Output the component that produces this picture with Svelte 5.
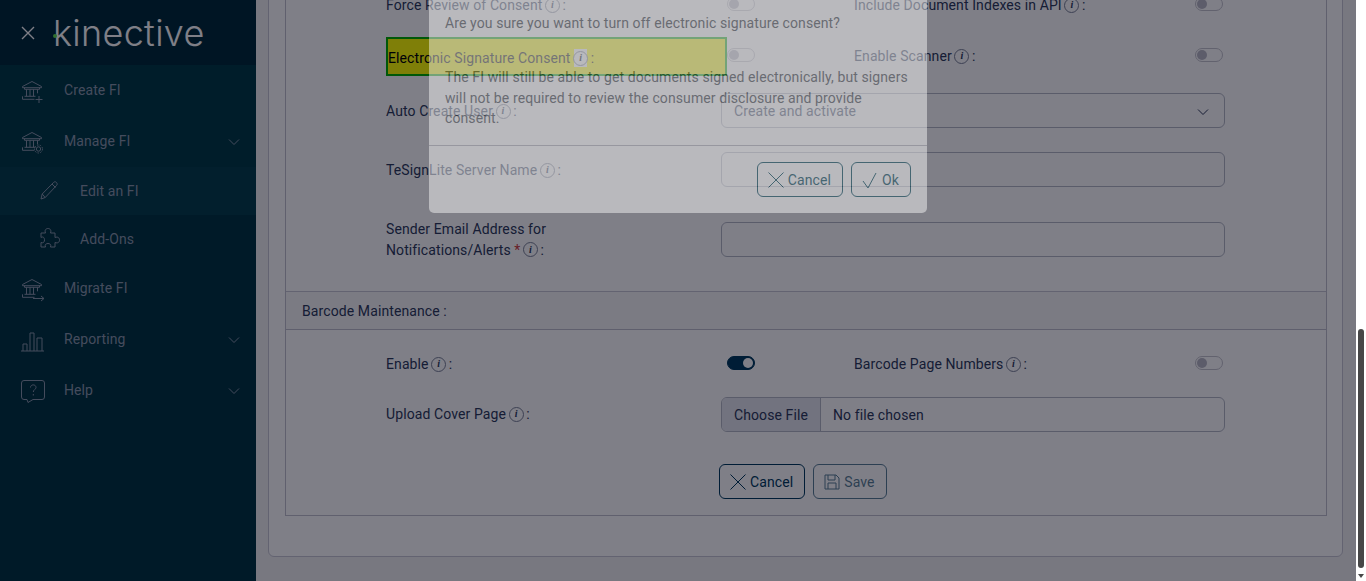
<script lang="ts">
  const nav = [
    { label: 'Create FI', icon: 'bank-plus', band: true },
    { label: 'Manage FI', icon: 'bank-gear', band: true, caret: true },
    { label: 'Edit an FI', icon: 'pencil', sub: true, active: true },
    { label: 'Add-Ons', icon: 'puzzle', sub: true },
    { label: 'Migrate FI', icon: 'bank-arrow' },
    { label: 'Reporting', icon: 'chart', caret: true },
    { label: 'Help', icon: 'help', caret: true },
  ];
</script>

{#snippet bank()}
  <path d="M2.5 8.5 12 3.5l9.500 5v1.200h-19zM4.500 9.700v1.600h15V9.700M6.500 11.300v7M10 11.300v7M13.500 11.300v7M17.500 11.300v4M4.500 18.300h11M2.500 18.300v3h12" />
{/snippet}

{#snippet info()}
  <span class="info"><i>i</i></span>
{/snippet}

{#snippet toggle(on = false)}
  <span class="toggle" class:on></span>
{/snippet}

<div class="page">
  <aside class="sidebar">
    <div class="brand">
      <svg class="close" viewBox="0 0 16 16" width="16" height="16"><path d="M2 2l12 12M14 2 2 14" /></svg>
      <span class="logo"><span class="logo-dot"></span>kinective</span>
    </div>
    <nav>
      {#each nav as item}
        <div class="nav-item" class:band={item.band} class:sub={item.sub} class:active={item.active}>
          <svg class="nav-icon" viewBox="0 0 26 26" width="26" height="26">
            {#if item.icon === 'bank-plus'}
              {@render bank()}
              <path d="M19 18v7M15.500 21.500h7" />
            {:else if item.icon === 'bank-gear'}
              {@render bank()}
              <circle cx="18.500" cy="20" r="2.200" />
              <circle cx="18.500" cy="20" r="4" stroke-dasharray="1.600 1.200" />
            {:else if item.icon === 'bank-arrow'}
              {@render bank()}
              <path d="M13 22.500h11M21 20l3 2.500-3 2.500" />
            {:else if item.icon === 'pencil'}
              <path d="M5 21l1.200-5L17.500 4.500c1-1 2.200-1 3 0s1 2 0 3L9.200 19.500zM6.200 16l3 3.500M16 6l3.500 3.500" />
            {:else if item.icon === 'puzzle'}
              <path d="M5 7h4.500c-1.200-3 .5-4.500 2.500-4.500S15.700 4 14.500 7H19v4.500c3-1.200 4.500.5 4.500 2.500s-1.500 3.700-4.500 2.500V21h-4.500c1-2.500-.7-3.500-2.500-3.500s-3.500 1-2.500 3.500H5v-4.500c2.500 1 3.500-.7 3.500-2.500S7.500 10 5 11.500z" />
            {:else if item.icon === 'chart'}
              <path d="M1 24h23M3 24v-7h4v7M10 24V6h4v18M17 24V11h5v13" />
            {:else}
              <path d="M4 2.500h18a2.500 2.500 0 0 1 2.500 2.500v14a2.500 2.500 0 0 1-2.500 2.500H13l-5 3-1-3H4A2.500 2.500 0 0 1 1.500 19V5A2.500 2.500 0 0 1 4 2.500z" />
              <path d="M10.500 9.500c0-3.500 5.500-3.500 5.500 0 0 2-2.700 2-2.700 4.500M13.300 16v1.500" />
            {/if}
          </svg>
          <span class="nav-label">{item.label}</span>
          {#if item.caret}
            <svg class="caret" viewBox="0 0 12 8" width="12" height="8"><path d="M1 1.500l5 5 5-5" /></svg>
          {/if}
        </div>
      {/each}
    </nav>
  </aside>

  <main class="content">
    <div class="card">
      <div class="panel">
        <div class="panel-body">
          <div class="row row-toggle gap-16">
            <span class="label">Force Review of Consent {@render info()} :</span>
            <div class="pair">
              {@render toggle()}
              <span class="label">Include Document Indexes in API {@render info()} :</span>
              {@render toggle()}
            </div>
          </div>
          <div class="row row-toggle gap-20">
            <span class="label highlight">Electronic Signature Consent <span class="info-lit">{@render info()}</span> :</span>
            <div class="pair">
              {@render toggle()}
              <span class="label">Enable Scanner {@render info()} :</span>
              {@render toggle()}
            </div>
          </div>
          <div class="row gap-24 nudge">
            <span class="label">Auto Create User {@render info()} :</span>
            <div class="field select">
              Create and activate
              <svg viewBox="0 0 12 8" width="12" height="8"><path d="M1 1.500l5 5 5-5" /></svg>
            </div>
          </div>
          <div class="row gap-32 nudge">
            <span class="label">TeSignLite Server Name {@render info()} :</span>
            <div class="field"></div>
          </div>
          <div class="row">
            <span class="label">Sender Email Address for<br />Notifications/Alerts <b>*</b> {@render info()} :</span>
            <div class="field"></div>
          </div>
        </div>

        <div class="section-title">Barcode Maintenance :</div>

        <div class="panel-body barcode">
          <div class="row row-toggle gap-16">
            <span class="label">Enable {@render info()} :</span>
            <div class="pair">
              {@render toggle(true)}
              <span class="label">Barcode Page Numbers {@render info()} :</span>
              {@render toggle()}
            </div>
          </div>
          <div class="row">
            <span class="label">Upload Cover Page {@render info()} :</span>
            <div class="field file">
              <span class="file-btn">Choose File</span>
              <span class="file-name">No file chosen</span>
            </div>
          </div>
          <div class="actions">
            <span class="btn">
              <svg viewBox="0 0 18 18" width="18" height="18"><path d="M1.500 1.500l15 15M16.500 1.500l-15 15" /></svg>
              Cancel
            </span>
            <span class="btn disabled">
              <svg viewBox="0 0 18 18" width="18" height="18"><path d="M2 2h11l3 3v11H2zM5 2v5h7V2M5 16v-6h8v6" /></svg>
              Save
            </span>
          </div>
        </div>
      </div>
    </div>
  </main>

  <div class="overlay">
    <div class="modal">
      <div class="modal-body">
        <p>Are you sure you want to turn off electronic signature consent?</p>
        <p class="detail">The FI will still be able to get documents signed electronically, but signers will not be required to review the consumer disclosure and provide consent.</p>
      </div>
      <div class="modal-footer">
        <span class="btn">
          <svg viewBox="0 0 18 18" width="18" height="18"><path d="M1.500 1.500l15 15M16.500 1.500l-15 15" /></svg>
          Cancel
        </span>
        <span class="btn">
          <svg viewBox="0 0 18 18" width="18" height="18"><path d="M2 10l5 7L15 2" /></svg>
          Ok
        </span>
      </div>
    </div>
  </div>

  <div class="scrollbar">
    <span class="thumb"></span>
    <span class="arrow"></span>
  </div>
</div>

<style>
  :global(body) {
    margin: 0;
    overflow: hidden;
  }

  .page {
    position: relative;
    display: flex;
    height: 581px;
    overflow: hidden;
    font-family: Roboto, "Liberation Sans", sans-serif;
    font-size: 14px;
    letter-spacing: 0.1px;
    line-height: 20.5px;
    color: #2d3a5a;
    background: #f0f0f0;
  }

  svg {
    fill: none;
    stroke: currentColor;
    stroke-width: 1;
  }

  /* sidebar */
  .sidebar {
    flex: 0 0 256px;
    background: #003440;
    color: #8a98aa;
  }

  .brand {
    display: flex;
    align-items: center;
    gap: 17px;
    height: 65px;
    padding-left: 20px;
    background: #002a38;
    color: #fff;
  }

  .close {
    stroke-width: 1.400;
  }

  .logo {
    position: relative;
    font-family: Inter, sans-serif;
    font-weight: 300;
    font-size: 36px;
    line-height: 40px;
    letter-spacing: 0.3px;
  }

  .logo-dot {
    position: absolute;
    left: 0;
    top: 21px;
    width: 4px;
    height: 4px;
    border-radius: 50%;
    background: #60e050;
  }

  .nav-item {
    display: flex;
    align-items: center;
    height: 51px;
    padding-left: 20px;
  }

  .nav-item.band {
    background: #003a44;
  }

  .nav-item.sub {
    height: 48px;
    padding-left: 36px;
  }

  .nav-item.active {
    background: #043e4a;
  }

  .nav-icon {
    flex: none;
    margin-right: 18px;
  }

  .caret {
    margin-left: auto;
    margin-right: 16px;
  }

  /* page content, scrolled to the bottom */
  .content {
    flex: 1;
    min-width: 0;
    display: flex;
    flex-direction: column;
    justify-content: flex-end;
    padding: 0 13px 24px 12px;
  }

  .card {
    flex: none;
    padding: 0 15px 40px 16px;
    background: #fff;
    border: 1px solid #c6c6d2;
    border-radius: 0 0 6px 6px;
  }

  .panel {
    border: 1px solid #c0c0cc;
    border-top: 0;
  }

  .panel-body {
    padding: 0 101px 31px 100px;
  }

  .section-title {
    height: 37px;
    padding-left: 16px;
    line-height: 39px;
    background: #f6f6f7;
    border-top: 1px solid #c6c6d2;
    border-bottom: 1px solid #bebeca;
  }

  .barcode {
    padding-top: 16px;
    padding-bottom: 16px;
  }

  .row {
    display: grid;
    grid-template-columns: 335px 504px;
    align-items: center;
    min-height: 35px;
  }

  .gap-16 { margin-bottom: 16px; }
  .gap-20 { margin-bottom: 20px; }
  .gap-24 { margin-bottom: 24px; }
  .gap-32 { margin-bottom: 32px; }

  .nudge .label,
  .nudge .select,
  .row-toggle .label {
    padding-top: 2px;
  }

  .barcode .row { margin-bottom: 16px; }
  .barcode .row:nth-child(2) { margin-bottom: 32px; }

  .pair {
    display: grid;
    grid-template-columns: 127px 341px 30px;
    align-items: center;
    padding-left: 6px;
  }

  .label b {
    color: #d04040;
    font-weight: 400;
  }

  .row-toggle .highlight {
    display: block;
    width: 337px;
    height: 35px;
    padding: 0;
    line-height: 39px;
    border: 2px solid #00b000;
    background: #ff0;
    color: #000;
    margin: -1px -6px -3px 0;
  }

  .info {
    display: inline-flex;
    align-items: center;
    justify-content: center;
    width: 15px;
    height: 15px;
    margin: 0 -1px 0 -1px;
    border: 1px solid #7a8296;
    border-radius: 50%;
    vertical-align: 2px;
    box-sizing: border-box;
  }

  .info i {
    font-family: "Liberation Serif", serif;
    font-weight: 700;
    font-size: 10px;
    line-height: 10px;
  }

  .info-lit {
    background: #fff;
    display: inline-block;
    line-height: 18px;
  }

  .toggle {
    position: relative;
    display: block;
    width: 28px;
    height: 14px;
    margin-top: -2px;
    box-sizing: border-box;
    border: 1px solid #c4c4cc;
    border-radius: 7px;
  }

  .toggle::after {
    content: "";
    position: absolute;
    left: 1px;
    top: 1px;
    width: 10px;
    height: 10px;
    border-radius: 50%;
    background: #b8b8c4;
  }

  .toggle.on {
    background: #003a5c;
    border-color: #003a5c;
  }

  .toggle.on::after {
    left: 15px;
    background: #fff;
  }

  .field {
    height: 35px;
    box-sizing: border-box;
    border: 1px solid #b4b8c4;
    border-radius: 6px;
    background: #fff;
  }

  .select {
    display: flex;
    align-items: center;
    justify-content: space-between;
    padding: 0 15px 0 12px;
  }

  .file {
    display: flex;
    align-items: center;
    overflow: hidden;
  }

  .file-btn {
    display: flex;
    align-items: center;
    height: 100%;
    padding: 1px 12px 0;
    box-sizing: border-box;
    background: #e4e6ee;
    border-right: 1px solid #b4b8c4;
  }

  .file-name {
    padding: 1px 0 0 12px;
  }

  .actions {
    display: flex;
    gap: 8px;
    margin-left: 333px;
  }

  .btn {
    display: inline-flex;
    align-items: center;
    gap: 3px;
    height: 35px;
    padding: 1px 11px 0 9px;
    box-sizing: border-box;
    border: 1px solid #003a5c;
    border-radius: 6px;
    color: #003a5c;
    background: transparent;
  }

  .btn svg {
    margin-top: -1px;
  }

  .btn.disabled {
    opacity: 0.65;
  }

  /* dialog fading in over the dimmed page */
  .overlay {
    position: absolute;
    inset: 0 10px 0 0;
    background: rgba(0, 0, 16, 0.5);
  }

  .modal {
    position: absolute;
    left: 429px;
    top: 0;
    width: 498px;
    height: 213px;
    box-sizing: border-box;
    background: #fff;
    border-radius: 0 0 5px 5px;
    opacity: 0.45;
    color: #50555a;
  }

  .modal-body {
    padding: 13px 16px 0;
    height: 132px;
    border-bottom: 1px solid #b4b4bc;
  }

  .modal-body p {
    margin: 0;
  }

  .modal-body .detail {
    margin-top: 33.6px;
  }

  .modal-footer {
    display: flex;
    justify-content: flex-end;
    gap: 8px;
    padding: 16px 16px 0;
  }

  .modal-footer .btn {
    color: #00495a;
    border-color: #00495a;
  }

  .scrollbar {
    position: relative;
    flex: 0 0 10px;
    background: #fff;
    z-index: 1;
  }

  .thumb {
    position: absolute;
    left: 2px;
    top: 329px;
    width: 6px;
    height: 239px;
    border-radius: 3px;
    background: #474747;
  }

  .arrow {
    position: absolute;
    left: 2px;
    top: 574px;
    border: 3px solid transparent;
    border-top: 4px solid #474747;
    border-bottom: 0;
  }
</style>
